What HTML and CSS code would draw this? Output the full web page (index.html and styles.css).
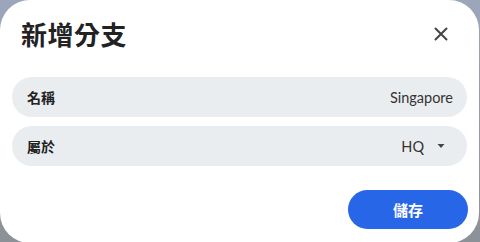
FILE: index.html
```html
<!DOCTYPE html>
<html lang="zh-Hant">
<head>
<meta charset="utf-8">
<link rel="stylesheet" href="styles.css">
</head>
<body>
<div class="dialog">
  <div class="header">
    <h1 class="title">新增分支</h1>
    <button class="close" aria-label="關閉">
      <svg width="24" height="24" viewBox="0 0 24 24"><path d="M6.5 6.5 L17.5 17.5 M17.5 6.5 L6.5 17.5" stroke="#444" stroke-width="2" stroke-linecap="round" fill="none"/></svg>
    </button>
  </div>
  <div class="fields">
    <div class="field">
      <span class="label">名稱</span>
      <span class="value">Singapore</span>
    </div>
    <div class="field select">
      <span class="label">屬於</span>
      <span class="value">HQ</span>
      <svg class="caret" width="10" height="6" viewBox="0 0 10 6"><path d="M1.5 1 L8.5 1 L5 5 Z" fill="#444"/></svg>
    </div>
  </div>
  <div class="footer">
    <button class="save">儲存</button>
  </div>
</div>
</body>
</html>
```
FILE: styles.css
```css
html, body {
  margin: 0;
  padding: 0;
}
body {
  width: 480px;
  height: 242px;
  overflow: hidden;
  background: linear-gradient(180deg, #9ca6bb 0%, #959aa3 60%, #8c9097 100%);
  font-family: Lato, "Noto Sans CJK TC", sans-serif;
}
.dialog {
  width: 479px;
  height: 243px;
  background: #fff;
  border-radius: 30px;
  display: flex;
  flex-direction: column;
  box-sizing: border-box;
}
.header {
  height: 68px;
  display: flex;
  align-items: center;
  justify-content: space-between;
  padding: 0 26px 0 21px;
}
.title {
  margin: 0;
  font-family: "Noto Sans CJK TC", sans-serif;
  font-size: 26px;
  font-weight: 700;
  color: #222;
  letter-spacing: 0.5px;
  line-height: 36px;
}
.close {
  width: 24px;
  height: 24px;
  padding: 0;
  border: 0;
  background: none;
  display: flex;
}
.fields {
  margin-top: 9px;
  padding: 0 12px;
  display: flex;
  flex-direction: column;
  gap: 9px;
}
.field {
  height: 40px;
  border-radius: 20px;
  background: #eaedf0;
  display: flex;
  align-items: center;
  padding: 0 14px 0 15px;
  font-size: 14px;
  color: #222;
}
.label {
  font-family: "Noto Sans CJK TC", sans-serif;
  font-weight: 700;
  flex: 1;
}
.value {
  font-family: Lato, sans-serif;
  font-size: 14.5px;
  color: #333;
}
.select {
  padding-right: 21px;
}
.caret {
  margin-left: 12px;
}
.footer {
  margin-top: 24px;
  display: flex;
  justify-content: flex-end;
  padding-right: 11px;
}
.save {
  width: 120px;
  height: 39px;
  border: 0;
  border-radius: 20px;
  background: #2766e6;
  color: #fff;
  font-family: "Noto Sans CJK TC", sans-serif;
  font-size: 15px;
  font-weight: 700;
  padding: 0;
}
```
